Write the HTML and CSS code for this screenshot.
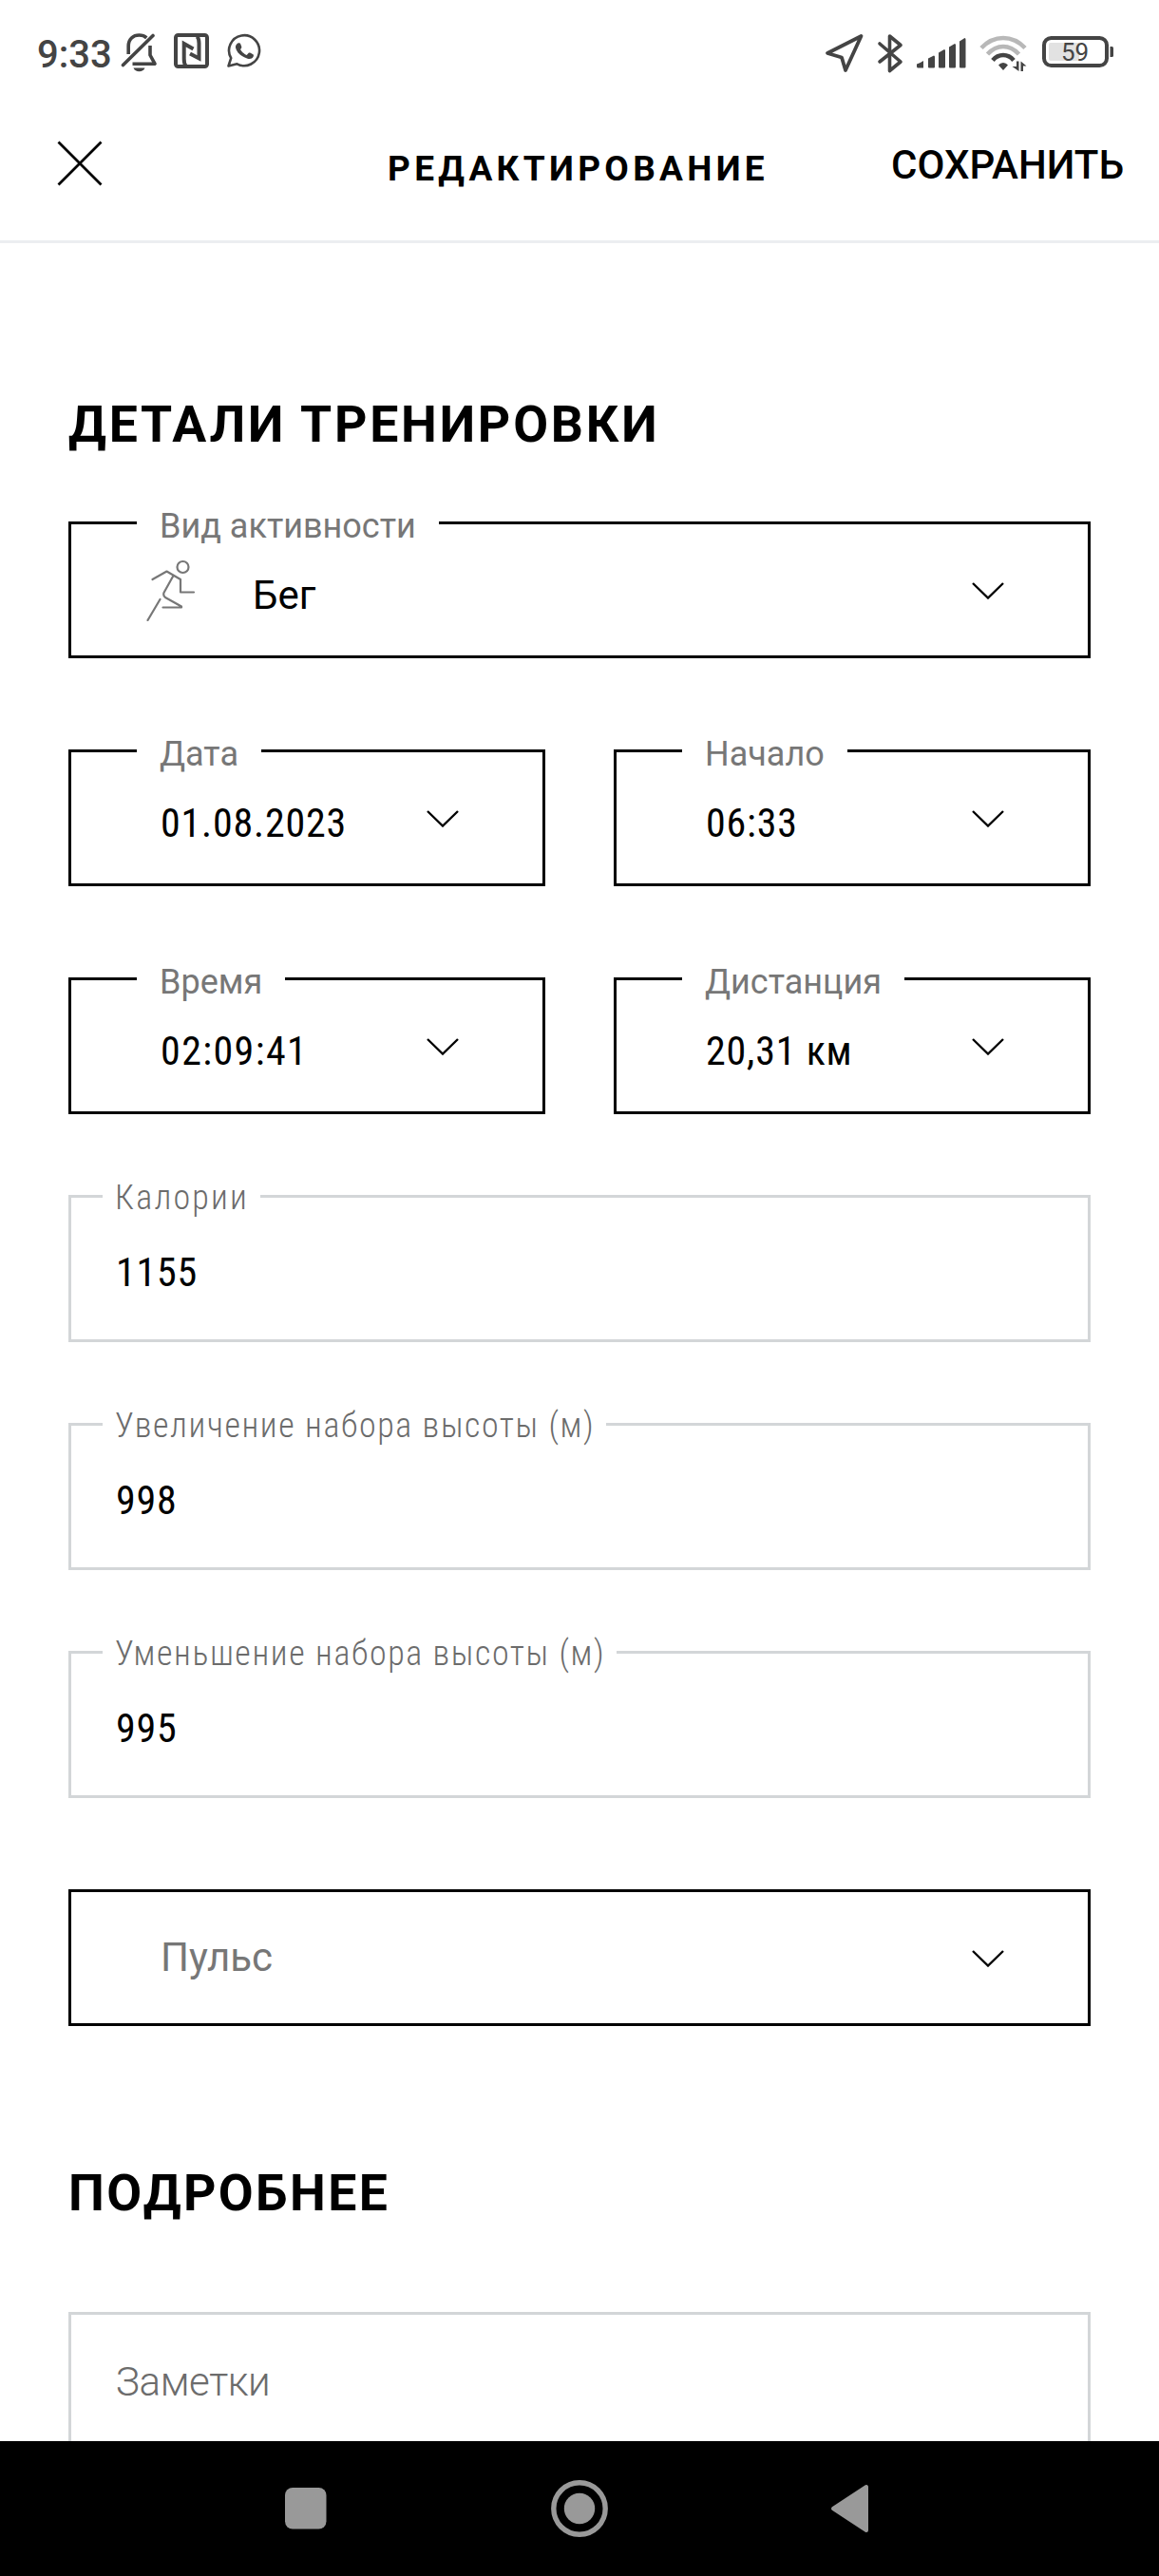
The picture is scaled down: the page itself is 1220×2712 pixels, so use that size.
FILE: index.html
```
<!DOCTYPE html>
<html lang="ru">
<head>
<meta charset="utf-8">
<title>Редактирование</title>
<link rel="stylesheet" href="styles.css">
</head>
<body>
<div class="screen">
  <div class="statusbar">
    <div class="status-left">
      <span class="clock">9:33</span>
      <svg class="ic-bell" width="40" height="44" viewBox="0 0 40 44" fill="none" stroke="#444" stroke-width="3.6">
        <path d="M8.2 23V14.5C8.2 7 13.2 3 19.5 3c3.2 0 5.8 1 7.8 2.8M31 14v10l5 9.200H12.500" stroke-linejoin="round"/>
        <path d="M2.500 34.500 34 3.500" stroke-linecap="round"/>
        <path d="M13.500 37.500h12c-1 2.500-3.200 3.700-6 3.700s-5-1.200-6-3.700z" fill="#444" stroke="none"/>
      </svg>
      <svg class="ic-nfc" width="38" height="38" viewBox="0 0 38 38" fill="none" stroke="#444">
        <rect x="2" y="2" width="33" height="33" rx="2.500" stroke-width="4"/>
        <path d="M12.500 34c-1.800-2-1.800-4-1.800-7V11l9.800 5.500M24.500 3.500c1.800 2 2 4 2 7V26.500L17 21.500" stroke-width="4"/>
      </svg>
      <svg class="ic-wa" width="38" height="38" viewBox="0 0 38 38" fill="none">
        <path d="M2.500 34.500 5.200 26.200A16 16 0 1 1 11.500 32.300z" stroke="#444" stroke-width="2.600" stroke-linejoin="round"/>
        <path d="M12.300 10.500c1.300-.8 2.600-.2 3 1l1 2.800c.2 1-.4 1.700-1.300 2.600 1.500 2.800 3.800 4.800 6.700 6.100l2-2.200c.6-.6 1.300-.5 2-.1l2.700 1.600c.8.500.6 1.500.2 2.500-1 2-3.500 2.600-6 1.900-7-2-11.700-7-12.600-11.500-.3-2 .8-3.900 2.300-4.700z" fill="#444"/>
      </svg>
    </div>
    <div class="status-right">
      <svg width="42" height="42" viewBox="0 0 42 42" fill="none" stroke="#444" stroke-width="3.800" stroke-linejoin="round"><path d="M38.500 3 3 21l15 4.500L22 39z"/></svg>
      <svg class="ic-bt" width="28" height="44" viewBox="0 0 28 44" fill="none" stroke="#444" stroke-width="3.600" stroke-linejoin="round" stroke-linecap="round"><path d="M3 12 25 31 13.500 40.500V4L25 13.500 3 31"/></svg>
      <svg class="ic-sig" width="52" height="34" viewBox="0 0 52 34" fill="#444">
        <path d="M0 28.500Q3.500 27.500 7 25v7.500H1.500Q0 32.500 0 31zM12 22.500 18 19.500Q19 19.500 19 21V31.500q0 1-1 1h-5q-1 0-1-1zM23 16.500 29 13q1 0 1 1.500V31.500q0 1-1 1h-5q-1 0-1-1zM34 10.500 40 7q1 0 1 1.500v23q0 1-1 1h-5q-1 0-1-1zM45 4.500 50.500 1Q51.500 1 51.500 2.500v29q0 1-1 1H46q-1 0-1-1z"/>
      </svg>
      <svg class="ic-wifi" width="50" height="38" viewBox="0 0 50 38" fill="none" stroke-width="4.600">
        <path d="M2 13.500Q12 3 25 3t23 10.500" stroke="#b8b8b8"/>
        <path d="M8.500 20Q16 12 25 12t16.500 8" stroke="#b8b8b8"/>
        <path d="M14 26.500Q18.500 21 25 21t11 5.500" stroke="#444"/>
        <path d="M25 29q3 0 5 2.500L25 37l-5-5.500Q22 29 25 29zM39 27.500h2.500V38L34.500 33H39zM43.500 38V27.500l6 5H46V38z" fill="#444"/>
      </svg>
      <svg class="ic-bat" width="77" height="34" viewBox="0 0 77 34">
        <rect x="2" y="2" width="66" height="29" rx="7.500" fill="none" stroke="#444" stroke-width="4"/>
        <path d="M9 7H39V26H9Q7 26 7 24V9Q7 7 9 7z" fill="#e2e2e2"/>
        <path d="M71.500 11h2q1.500 0 1.500 1.500v8q0 1.500-1.500 1.500h-2z" fill="#444"/>
        <text x="34.500" y="26" class="bat-text" text-anchor="middle">59</text>
      </svg>
    </div>
  </div>
  <header class="appbar">
    <svg class="close" width="48" height="48" viewBox="0 0 48 48" stroke="#000" stroke-width="2.800"><path d="M1.500 1.500 46.500 46.500M46.500 1.500 1.500 46.500"/></svg>
    <h1 class="title">РЕДАКТИРОВАНИЕ</h1>
    <span class="save">СОХРАНИТЬ</span>
  </header>
  <main class="content">
    <h2 class="heading">ДЕТАЛИ ТРЕНИРОВКИ</h2>
    <div class="field select">
      <span class="label">Вид активности</span>
      <svg class="runner" width="52" height="66" viewBox="0 0 52 66" fill="none" stroke="#777" stroke-width="2.200" stroke-linecap="round" stroke-linejoin="round"><circle cx="38.500" cy="9" r="6"/><path d="M6.500 22 21.500 13.500 36 22V35.500H50M28.500 18 18.500 36Q17.500 39 20 41L37 50.500V51.500H17.500M14.500 43 1.500 65"/></svg>
      <span class="value activity">Бег</span>
      <svg class="chev" width="34" height="18" viewBox="0 0 34 18"><path d="M1 1 17 16.500 33 1"/></svg>
    </div>
    <div class="row">
      <div class="field select"><span class="label">Дата</span><span class="value">01.08.2023</span><svg class="chev" width="34" height="18" viewBox="0 0 34 18"><path d="M1 1 17 16.500 33 1"/></svg></div>
      <div class="field select"><span class="label">Начало</span><span class="value">06:33</span><svg class="chev" width="34" height="18" viewBox="0 0 34 18"><path d="M1 1 17 16.500 33 1"/></svg></div>
    </div>
    <div class="row">
      <div class="field select"><span class="label">Время</span><span class="value duration">02:09:41</span><svg class="chev" width="34" height="18" viewBox="0 0 34 18"><path d="M1 1 17 16.500 33 1"/></svg></div>
      <div class="field select"><span class="label">Дистанция</span><span class="value">20,31 км</span><svg class="chev" width="34" height="18" viewBox="0 0 34 18"><path d="M1 1 17 16.500 33 1"/></svg></div>
    </div>
    <div class="inputs">
      <div class="field input"><span class="label label-short">Калории</span><span class="value">1155</span></div>
      <div class="field input"><span class="label">Увеличение набора высоты (м)</span><span class="value">998</span></div>
      <div class="field input"><span class="label">Уменьшение набора высоты (м)</span><span class="value">995</span></div>
    </div>
    <div class="field select"><span class="placeholder">Пульс</span><svg class="chev" width="34" height="18" viewBox="0 0 34 18"><path d="M1 1 17 16.500 33 1"/></svg></div>
    <h2 class="heading heading-more">ПОДРОБНЕЕ</h2>
    <div class="field input notes"><span class="placeholder">Заметки</span></div>
  </main>
  <nav class="navbar">
    <svg width="44" height="44" viewBox="0 0 44 44"><rect width="43.500" height="43.500" rx="8" fill="#999"/></svg>
    <svg width="60" height="60" viewBox="0 0 60 60"><circle cx="30" cy="30" r="27.200" fill="none" stroke="#999" stroke-width="5.400"/><circle cx="30" cy="30" r="16.200" fill="#999"/></svg>
    <svg width="42" height="52" viewBox="0 0 42 52"><path d="M3 26 38 3V49z" fill="#999" stroke="#999" stroke-width="4" stroke-linejoin="round"/></svg>
  </nav>
</div>
</body>
</html>
```
FILE: styles.css
```
* { box-sizing: border-box; }
body { margin: 0; background: #fff; }
.screen {
  width: 1220px; height: 2712px; overflow: hidden;
  display: flex; flex-direction: column;
  background: #fff; color: #000;
  font-family: Roboto, "Noto Sans", sans-serif;
}
svg { display: block; flex: none; }

.statusbar {
  height: 108px; flex: none;
  display: flex; justify-content: space-between;
  padding: 0 46px 0 39px; color: #444;
}
.status-left, .status-right { display: flex; align-items: center; }
.clock { font-size: 40px; line-height: 40px; font-weight: 500; width: 88px; padding-top: 7px; }
.ic-bell { margin-top: 3px; }
.ic-nfc { margin-left: 16px; }
.ic-wa { margin-left: 17px; }
.status-right { padding-top: 3px; }
.ic-bt { margin-left: 13px; }
.ic-sig { margin-left: 14px; }
.ic-wifi { margin-left: 14px; }
.ic-bat { margin-left: 16px; margin-top: -2px; }
.bat-text { font: 400 26px Roboto, sans-serif; fill: #444; }

.appbar {
  height: 148px; flex: none;
  display: grid; grid-template-columns: 348px auto 1fr; align-items: center;
  border-bottom: 3px solid #eceef1;
  padding: 0 37px 17px 60px;
}
.title { margin: 0; padding-top: 11px; font-size: 37px; line-height: 44px; font-weight: 700; letter-spacing: 4.3px; }
.save { justify-self: end; font-size: 42px; line-height: 48px; font-weight: 500; padding-top: 3px; }

.content { flex: 1; min-height: 0; overflow: hidden; padding: 160px 72px 0; display: flex; flex-direction: column; }
.heading { margin: 0 0 73px; flex: none; height: 60px; font-size: 53.5px; line-height: 61px; font-weight: 700; letter-spacing: 2.8px; white-space: nowrap; }
.heading-more { margin: 145px 0 96px; letter-spacing: 2.4px; }

.field { position: relative; flex: none; display: flex; align-items: center; border: 3px solid #000; }
.select { height: 144px; padding: 0 88px 0 94px; }
.input { height: 155px; padding: 9px 0 0 47px; border-color: #d3d6d8; }
.row { display: grid; grid-template-columns: 502px 502px; justify-content: space-between; margin-top: 96px; }
.inputs { display: flex; flex-direction: column; gap: 85px; margin: 85px 0 96px; }

.label {
  position: absolute; top: -19px; left: 69px; padding: 0 24px;
  background: #fff; color: #777; white-space: nowrap;
  font-size: 36px; line-height: 42px;
}
.input .label { left: 33px; top: -21px; padding: 0 12px 0 13px; font-stretch: 75%; font-weight: 300; letter-spacing: 1.6px; color: #6c6c6c; }
.input .label-short { letter-spacing: 2.2px; }
.value { font-size: 42px; line-height: 48px; font-stretch: 75%; letter-spacing: .8px; white-space: nowrap; }
.select .value { padding-top: 11px; }
.value.duration { letter-spacing: 1.4px; }
.value.activity { font-stretch: 100%; letter-spacing: 0; }
.placeholder { font-size: 42px; line-height: 48px; color: #777; }
.runner { margin: 0 60px 0 -15px; }
.chev { margin: 2px 0 0 auto; fill: none; stroke: #000; stroke-width: 2.4; }
.notes { padding-top: 0; padding-bottom: 8px; }
.notes .placeholder { font-weight: 300; letter-spacing: -.4px; color: #6c6c6c; }

.navbar {
  height: 142px; flex: none; background: #000;
  display: flex; align-items: center;
  padding-left: 300px;
}
.navbar svg:nth-child(2) { margin-left: 236px; }
.navbar svg:nth-child(3) { margin-left: 234px; }
```
